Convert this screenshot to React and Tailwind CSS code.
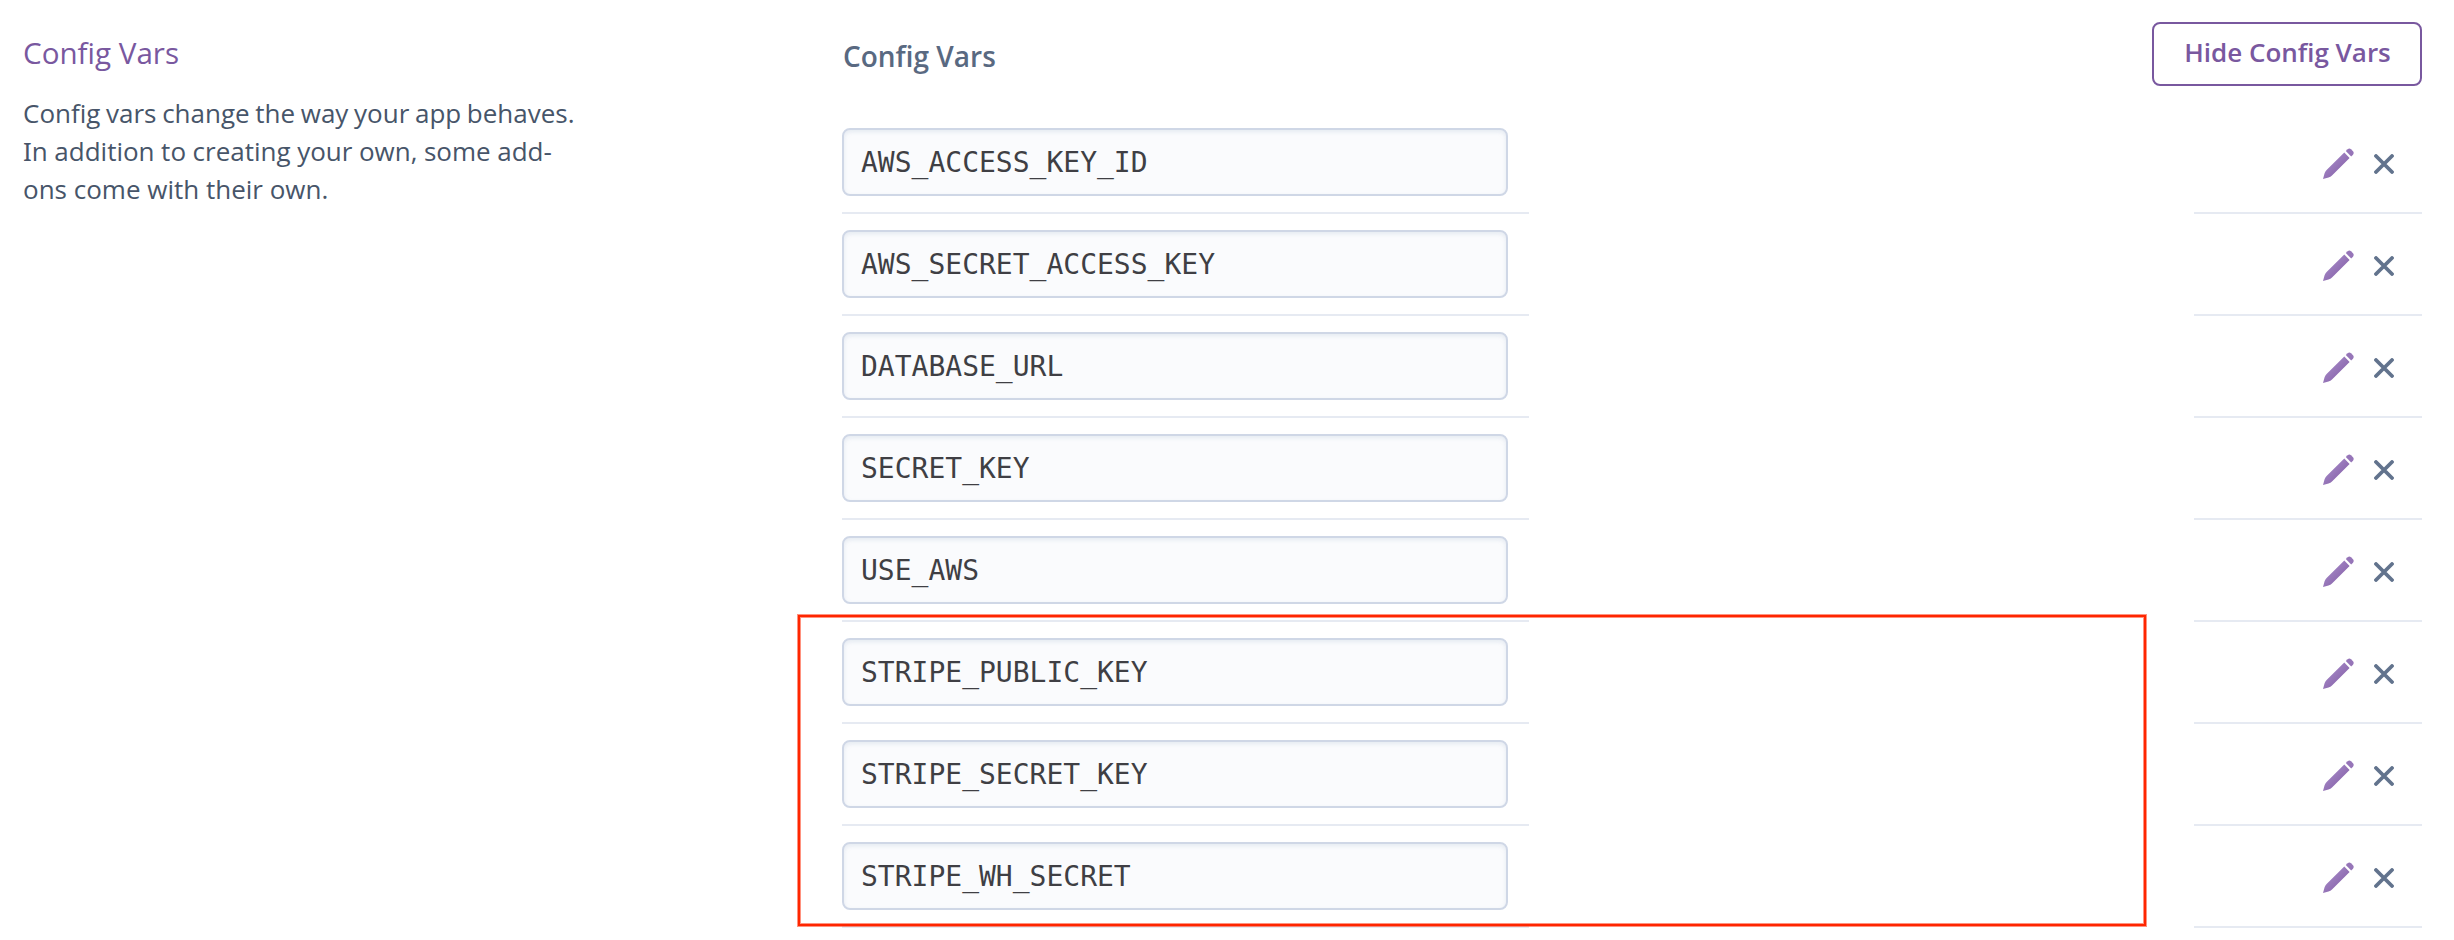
const CONFIG_VARS = [
  'AWS_ACCESS_KEY_ID',
  'AWS_SECRET_ACCESS_KEY',
  'DATABASE_URL',
  'SECRET_KEY',
  'USE_AWS',
  'STRIPE_PUBLIC_KEY',
  'STRIPE_SECRET_KEY',
  'STRIPE_WH_SECRET',
];

function PencilIcon() {
  return (
    <svg width="31" height="32" viewBox="0 0 31 32" aria-hidden="true">
      <defs>
        <linearGradient id="pencil" x1="0" y1="0" x2="1" y2="1">
          <stop offset="0.2" stopColor="#a589c6" />
          <stop offset="0.8" stopColor="#8762aa" />
        </linearGradient>
      </defs>
      <path fill="url(#pencil)" d="M0 31L1.5 25.5Q2 23.5 3.6 22L21.3 4.6L26.6 9.9L9 27.5Q7.5 29 5.5 29.6Z" />
      <path fill="#9675b8" d="M22.8 3.1L24.6 1.3Q26.3 -.2 28 1.2L30 3.3Q31.4 5 30 6.7L28.2 8.4Z" />
    </svg>
  );
}

function CloseIcon() {
  return (
    <svg width="20" height="20" viewBox="0 0 20 20" fill="none" stroke="#62738d" strokeWidth="3.8" strokeLinecap="round" aria-hidden="true">
      <path d="M2 2L18 18M18 2L2 18" />
    </svg>
  );
}

function ConfigVarRow({ name }) {
  return (
    <li className="flex h-[102px] justify-between">
      <div className="w-[687px] border-b-2 border-[#e6eaf2] pt-4">
        <div className="flex h-[68px] w-[666px] items-center rounded-lg border-2 border-[#cfd7e6] bg-[#fafbfd] pt-[2px] pl-[17px] font-['DejaVu_Sans_Mono',monospace] text-[28px] leading-[62px] text-[#3f3f44] shadow-[inset_0_2px_4px_rgba(190,202,220,0.35)]">
          {name}
        </div>
      </div>
      <div className="flex w-[228px] items-center justify-end gap-5 border-b-2 border-[#e6eaf2] pt-1 pr-7">
        <button type="button" aria-label="Edit"><PencilIcon /></button>
        <button type="button" aria-label="Remove"><CloseIcon /></button>
      </div>
    </li>
  );
}

export default function App() {
  return (
    <div className="relative flex h-[940px] w-full overflow-hidden bg-white pr-8 pl-[23px] font-['Open_Sans',sans-serif]">
      <aside className="w-[819px] shrink-0 pt-[33px]">
        <h2 className="text-[29.6px] leading-10 text-[#79589f]">Config Vars</h2>
        <p className="mt-[21px] text-[26px] leading-[38px] whitespace-nowrap text-[#475569]">
          <span className="[word-spacing:-1.1px]">Config vars change the way your app behaves.</span>
          <br />
          <span className="[word-spacing:-0.2px]"><span className="font-['Noto_Sans',sans-serif]">I</span>n addition to creating your own, some add-</span>
          <br />
          ons come with their own.
        </p>
      </aside>

      <main className="grow">
        <header className="flex h-28 items-start justify-between">
          <h3 className="pt-9 pl-px text-[28px] leading-10 font-semibold text-[#596981]">Config Vars</h3>
          <button type="button" className="mt-[22px] flex h-16 w-[270px] items-center justify-center rounded-lg border-2 border-[#79589f] pb-1 pl-px text-[26px] leading-10 font-semibold whitespace-nowrap text-[#79589f]">
            Hide Config Vars
          </button>
        </header>
        <ul>
          {CONFIG_VARS.map((name) => <ConfigVarRow key={name} name={name} />)}
        </ul>
      </main>

      <div className="pointer-events-none absolute top-[615px] left-[798px] h-[311px] w-[1348px] border-2 border-[#ff2600] shadow-[0_0_0_1px_rgba(255,38,0,0.5),inset_0_0_0_1px_rgba(255,38,0,0.5)]" />
    </div>
  );
}
